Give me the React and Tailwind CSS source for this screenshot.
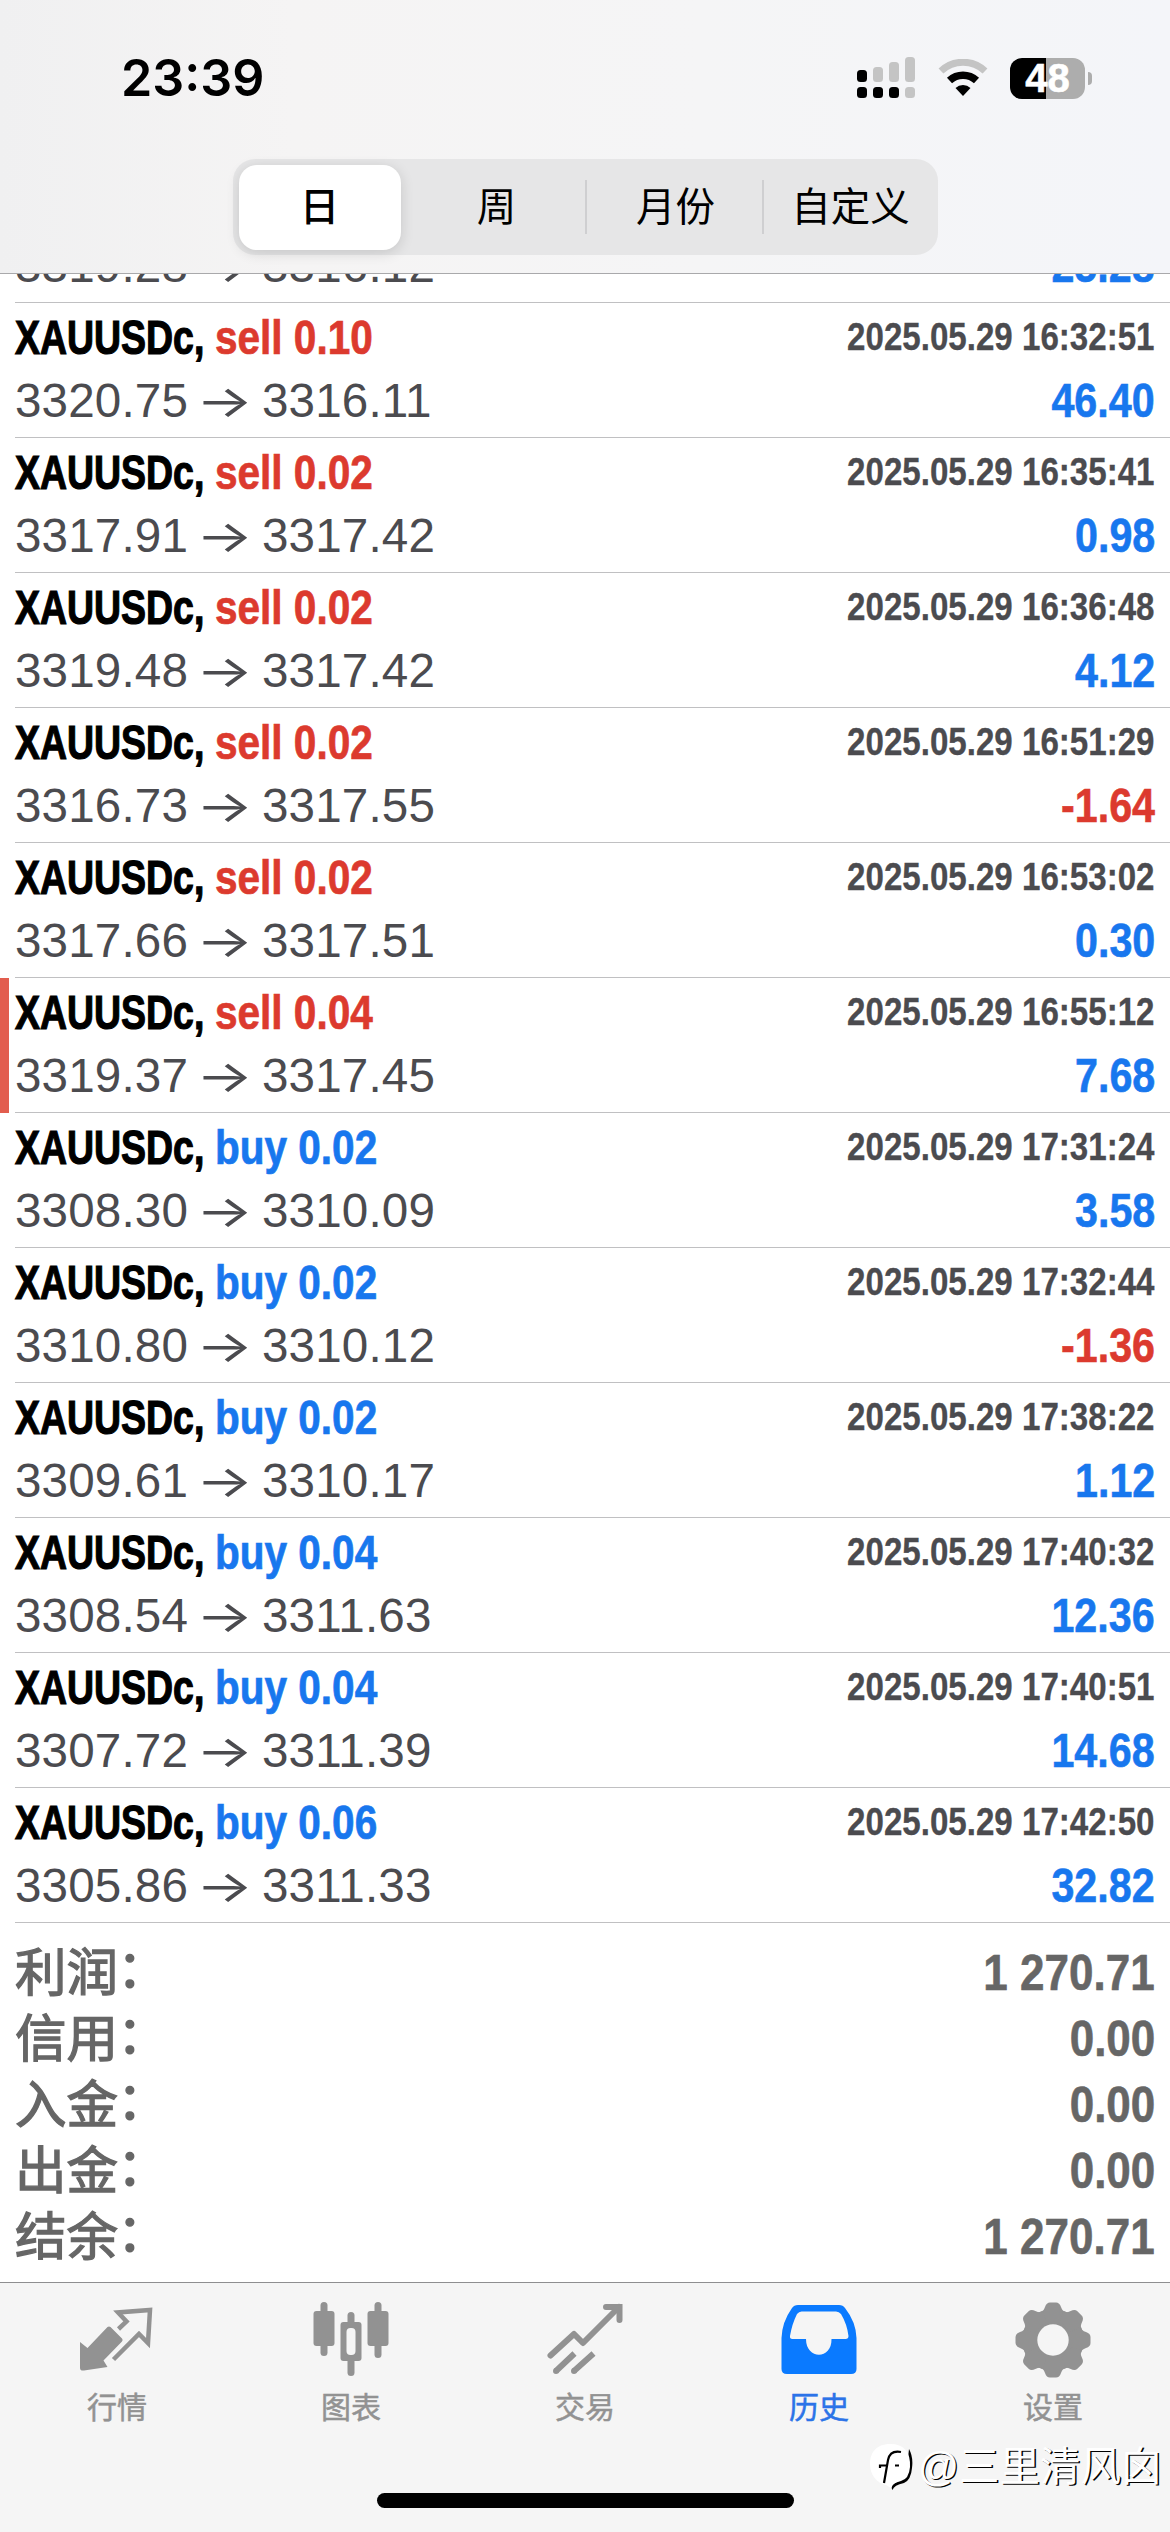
const deals = [
  ['sell', '0.10', '16:32:51', '3320.75', '3316.11', '46.40'],
  ['sell', '0.02', '16:35:41', '3317.91', '3317.42', '0.98'],
  ['sell', '0.02', '16:36:48', '3319.48', '3317.42', '4.12'],
  ['sell', '0.02', '16:51:29', '3316.73', '3317.55', '-1.64'],
  ['sell', '0.02', '16:53:02', '3317.66', '3317.51', '0.30'],
  ['sell', '0.04', '16:55:12', '3319.37', '3317.45', '7.68', true],
  ['buy', '0.02', '17:31:24', '3308.30', '3310.09', '3.58'],
  ['buy', '0.02', '17:32:44', '3310.80', '3310.12', '-1.36'],
  ['buy', '0.02', '17:38:22', '3309.61', '3310.17', '1.12'],
  ['buy', '0.04', '17:40:32', '3308.54', '3311.63', '12.36'],
  ['buy', '0.04', '17:40:51', '3307.72', '3311.39', '14.68'],
  ['buy', '0.06', '17:42:50', '3305.86', '3311.33', '32.82'],
];

const totals = [
  ['利润', '1 270.71'],
  ['信用', '0.00'],
  ['入金', '0.00'],
  ['出金', '0.00'],
  ['结余', '1 270.71'],
];

function Prices({ from, to }) {
  return (
    <div className="flex h-[54px] items-center text-[47.6px] leading-[54px] tracking-[0.15px] text-[#4b4b4f]">
      <span className="w-[181px]">{from}</span>
      <span className="w-[66px]">
        <span className="inline-block origin-left scale-x-[1.36] font-['Inter',sans-serif] text-[44px] font-normal">→</span>
      </span>
      <span>{to}</span>
    </div>
  );
}

function Profit({ value }) {
  return (
    <span className={`origin-right scale-x-[0.87] text-[47.4px] leading-[54px] font-bold [-webkit-text-stroke:0.6px_currentColor] ${value.startsWith('-') ? 'text-[#dc3a2e]' : 'text-[#1877ee]'}`}>
      {value}
    </span>
  );
}

function Deal({ deal }) {
  const [side, lots, time, from, to, profit, marked] = deal;
  return (
    <li className="flex h-[135px]">
      <span className={`w-[9px] shrink-0 ${marked ? 'bg-[#e25d4e]' : ''}`} />
      <div className="ml-1.5 flex flex-1 flex-col border-b border-[#c0c0c2] pt-[8px] pr-[15px]">
        <div className="flex h-[54px] justify-between font-bold whitespace-nowrap [-webkit-text-stroke:0.7px_currentColor]">
          <div className="flex text-[47.4px] leading-[54px]">
            <span className="w-[200px]">
              <span className="inline-block origin-left scale-x-[0.79] text-black [-webkit-text-stroke:1.2px_currentColor]">XAUUSDc,</span>
            </span>
            <span className={`origin-left scale-x-[0.855] ${side === 'sell' ? 'text-[#dc3a2e]' : 'text-[#1877ee]'}`}>
              {side} {lots}
            </span>
          </div>
          <span className="origin-right scale-x-[0.86] text-[38.5px] leading-[52px] text-[#4b4b4f] [-webkit-text-stroke:0.3px_currentColor]">2025.05.29 {time}</span>
        </div>
        <div className="mt-[9px] flex justify-between">
          <Prices from={from} to={to} />
          <Profit value={profit} />
        </div>
      </div>
    </li>
  );
}

function Signal() {
  return (
    <svg className="h-[42px] w-[59px]" viewBox="0 0 59 42">
      <rect x="0" y="13" width="10" height="12" rx="3.5" />
      <g fill="#c4c4c4">
        <rect x="16" y="10" width="10" height="15" rx="3.5" />
        <rect x="32" y="5" width="10" height="20" rx="3.5" />
        <rect x="48" y="0" width="10" height="25" rx="3.5" />
        <rect x="48" y="30" width="10" height="11" rx="3.5" />
      </g>
      <rect x="0" y="30" width="10" height="11" rx="3.5" />
      <rect x="16" y="30" width="10" height="11" rx="3.5" />
      <rect x="32" y="30" width="10" height="11" rx="3.5" />
    </svg>
  );
}

function Wifi() {
  return (
    <svg className="h-[38px] w-[50px]" viewBox="0 0 50 38">
      <path d="M3 12 A32 32 0 0 1 47 12" fill="none" stroke="#c4c4c4" strokeWidth="7" />
      <path d="M11.500 21.500 A20 20 0 0 1 38.500 21.500" fill="none" stroke="#000" strokeWidth="7.500" />
      <path d="M17.500 29 A11 11 0 0 1 32.500 29 L25 37 Z" />
    </svg>
  );
}

function Battery() {
  return (
    <div className="flex items-center gap-[3px]">
      <div className="flex h-[41px] w-[75px] items-center justify-center rounded-[12px] bg-[linear-gradient(90deg,#000_48%,#adadad_48%)] font-['Liberation_Sans',sans-serif] text-[40px] leading-[41px] font-bold text-white [-webkit-text-stroke:0.6px_#fff]">
        48
      </div>
      <span className="h-[13px] w-[4px] rounded-r-full bg-[#adadad]" />
    </div>
  );
}

function QuotesIcon() {
  return (
    <svg className="h-[76px] w-[76px]" viewBox="0 0 76 76" fill="#929292">
      <path d="M1 40 L8.500 46 L28.500 25 Q30 23.800 31.500 25 L43 36.500 Q44.300 38 43 39.500 L24.500 58.500 L28.500 65 L5 68.500 Q1 69 1 66 Z" />
      <path d="M39.500 27 L47.500 19.500 L39 10.500 L71 8 L69 41 L60 32 L34.500 57.500" fill="none" stroke="#929292" strokeWidth="4.500" />
    </svg>
  );
}

function ChartIcon() {
  return (
    <svg className="h-[76px] w-[76px]" viewBox="0 0 76 76" fill="#929292">
      <rect x="7.500" y="0" width="7" height="54" rx="3.500" />
      <rect x="0.500" y="9" width="21" height="35" rx="3" />
      <rect x="61.500" y="0" width="7" height="56" rx="3.500" />
      <rect x="54.500" y="9" width="21" height="35" rx="3" />
      <rect x="34.500" y="10" width="7" height="64" rx="3.500" />
      <rect x="27.500" y="20" width="21" height="39" rx="3" />
      <rect x="33.500" y="26" width="9" height="27" rx="4" fill="#f5f5f5" />
    </svg>
  );
}

function TradeIcon() {
  return (
    <svg className="h-[76px] w-[76px]" viewBox="0 0 76 76" fill="none" stroke="#929292" strokeWidth="6" strokeLinecap="round">
      <path d="M3.500 53.500 L27 32 L36 41 L72 5" strokeLinejoin="round" />
      <path d="M59 5 H72.500 V18" />
      <path d="M9 69 L27.500 51.500 M27 69 L46.500 51.500" strokeLinecap="butt" />
      <path d="M9 69 h.01 M27 69 h.01" />
    </svg>
  );
}

function HistoryIcon() {
  return (
    <svg className="h-[76px] w-[76px]" viewBox="0 0 76 76">
      <path d="M11 6 Q13 3 17 3 H58 Q62 3 64 6 Q75 20 75.500 36 V67 Q75.500 72 70 72 H6 Q0.500 72 0.500 67 V36 Q1 20 11 6 Z" fill="#0a7aff" />
      <path d="M16 12 Q18 9.500 20.500 9.500 H55 Q58 9.500 60 12 Q66 22 67.500 34 Q67.500 37 64.500 37 H50.500 C51 58 25 58 25 37 H11.500 Q8.500 37 9 34 Q11 22 16 12 Z" fill="#f5f5f5" />
    </svg>
  );
}

function GearIcon() {
  return (
    <svg className="h-[76px] w-[76px]" viewBox="0 0 76 76" fill="#929292">
      <circle cx="38" cy="38" r="31" />
      {[0, 45, 90, 135, 180, 225, 270, 315].map((a) => (
        <path key={a} transform={`rotate(${a} 38 38)`} d="M25 11 Q28.500 9.500 30 5 Q31.500 0.500 35 0.500 H41 Q44.500 0.500 46 5 Q47.500 9.500 51 11 L46 20 H30 Z" />
      ))}
      <circle cx="38" cy="38" r="15.700" fill="#f5f5f5" />
    </svg>
  );
}

const tabs = [
  ['行情', QuotesIcon],
  ['图表', ChartIcon],
  ['交易', TradeIcon],
  ['历史', HistoryIcon, true],
  ['设置', GearIcon],
];

function Watermark() {
  return (
    <div className="absolute top-[159px] left-[870px] flex h-[50px] w-[300px] items-center">
      <svg className="h-[48px] w-[43px] shrink-0" viewBox="0 0 43 48">
        <path d="M39 6 Q43.500 14 42 25 Q41 37 34 40 Q24 42 22.500 47 Q20 43 25 40 L36 34 Z" fill="#000" />
        <path d="M20 1 C6 1 0 10 0 21 C0 32 7 40 16 42 L21 45 Q22 40 31 38 Q39 36 40 24 Q41 1 20 1 Z" fill="#fff" />
        <path d="M31 9 Q20 7 18 17 L14 40" fill="none" stroke="#000" strokeWidth="2.200" />
        <path d="M10 25 V22.500 H18 M25 22.500 H29" fill="none" stroke="#000" strokeWidth="2.200" />
      </svg>
      <span className="ml-[5px] text-[40.500px] leading-[50px] whitespace-nowrap text-white [text-shadow:1.3px_1.2px_0_#000]">
        @三里清风囟
      </span>
    </div>
  );
}

export default function App() {
  return (
    <div className="flex h-[2532px] w-[1170px] flex-col overflow-hidden bg-white font-['Liberation_Sans','Noto_Sans_CJK_SC',sans-serif] text-black">
      <header className="flex h-[274px] shrink-0 flex-col border-b border-[#a9a9ab] bg-[linear-gradient(90deg,#f0f0f1,#f5f4f4_25%,#f5f5f6_60%,#f4f5f9)]">
        <div className="flex h-[159px] items-start justify-between pr-[78px] pl-[121px]">
          <span className="mt-[47px] origin-left scale-x-[0.985] font-['Inter',sans-serif] text-[51px] leading-[62px] font-semibold">23:39</span>
          <div className="mt-[57px] flex items-center gap-[22px]">
            <Signal />
            <Wifi />
            <Battery />
          </div>
        </div>
        <div className="mx-auto flex h-[96px] w-[705px] items-center rounded-[22px] bg-[#e6e6e7] p-[6px] text-[39.5px] leading-none">
          <span className="flex h-[85px] w-[162px] items-center justify-center rounded-[18px] bg-white pt-[2px] font-medium shadow-[0_3px_14px_rgba(0,0,0,0.14)]">日</span>
          <span className="flex h-[54px] w-[186px] items-center justify-center border-r-2 border-[#cfcfd1] pt-[2px] pl-[8px]">周</span>
          <span className="flex h-[54px] w-[177px] items-center justify-center border-r-2 border-[#cfcfd1] pt-[2px] pl-[3px]">月份</span>
          <span className="flex h-[54px] flex-1 items-center justify-center pt-[2px] pl-[6px]">自定义</span>
        </div>
      </header>

      <main className="flex h-[2008px] shrink-0 flex-col">
        <div className="flex h-[29px] items-end overflow-hidden">
          <div className="ml-[15px] flex flex-1 justify-between border-b border-[#c0c0c2] pr-[15px] pb-[9px]">
            <Prices from="3319.28" to="3316.12" />
            <Profit value="25.28" />
          </div>
        </div>
        <ul>
          {deals.map((d) => (
            <Deal key={d[2]} deal={d} />
          ))}
        </ul>
        <dl className="flex flex-col pt-[17px] pr-[15px] pl-[15px] text-[#666]">
          {totals.map(([name, value]) => (
            <div key={name} className="flex h-[66px] items-center justify-between leading-[66px]">
              <dt className="text-[51.500px] [-webkit-text-stroke:1.3px_currentColor]">
                {name}
                <span className="relative -top-[4px] -left-px">：</span>
              </dt>
              <dd className="origin-right scale-x-[0.88] text-[50px] font-bold [-webkit-text-stroke:0.6px_currentColor]">{value}</dd>
            </div>
          ))}
        </dl>
      </main>

      <nav className="relative flex h-[250px] shrink-0 flex-col border-t border-[#8e8e90] bg-[#f5f5f5]">
        <div className="flex pt-[19px]">
          {tabs.map(([name, Icon, active]) => (
            <div key={name} className={`flex w-[234px] flex-col items-center gap-[10px] text-[30px] leading-[40px] [-webkit-text-stroke:0.5px_currentColor] ${active ? 'text-[#2b73e8]' : 'text-[#929292]'}`}>
              <Icon />
              <span>{name}</span>
            </div>
          ))}
        </div>
        <div className="mt-[65px] ml-[377px] h-[15px] w-[417px] rounded-full bg-black" />
        <Watermark />
      </nav>
    </div>
  );
}
